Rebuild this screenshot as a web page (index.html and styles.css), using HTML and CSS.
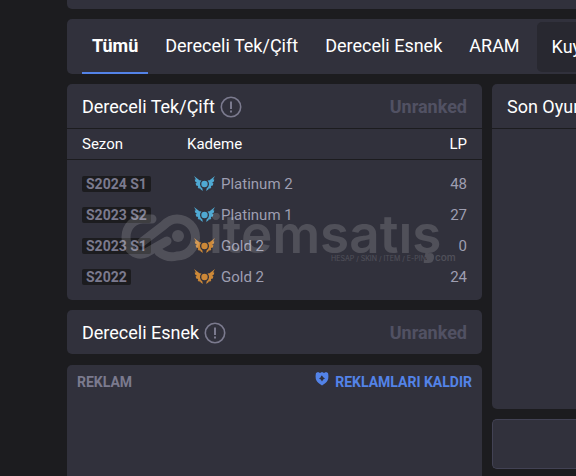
FILE: index.html
```html
<!DOCTYPE html>
<html lang="tr">
<head>
<meta charset="utf-8">
<meta name="viewport" content="width=device-width, initial-scale=1">
<title>Dereceli</title>
<link rel="stylesheet" href="styles.css">
</head>
<body>
<svg class="defs" aria-hidden="true">
  <symbol id="wings" viewBox="0 0 21 15">
    <circle cx="10.500" cy="8" r="3.200"/>
    <path d="M0 0 5.500 4.200 7.500 4.600Q5.800 6.300 6 8.500 6.300 11 8.300 12.200L8.800 15 6.500 13.200 5.900 11.800 5.200 12.900 3.700 11.300 4.200 10 2.200 9.500 1.600 7.300 3 7 1 5.300 0.800 3.300 2 3.500Z"/>
    <path d="M21 0 15.500 4.200 13.500 4.600Q15.200 6.300 15 8.500 14.700 11 12.700 12.200L12.200 15 14.500 13.200 15.100 11.800 15.800 12.900 17.300 11.300 16.800 10 18.800 9.500 19.400 7.300 18 7 20 5.300 20.200 3.300 19 3.500Z"/>
  </symbol>
  <symbol id="info" viewBox="0 0 22 22">
    <circle cx="11" cy="11" r="9.700" fill="none" stroke="currentColor" stroke-width="1.600"/>
    <path d="M10 5.500h2v7.500h-2zM10 14.500h2v2h-2z" fill="currentColor"/>
  </symbol>
</svg>
<div class="page">
  <div class="panel strip"></div>
  <nav class="panel tabs">
    <a class="tab active" href="#all">Tümü</a>
    <a class="tab" href="#solo">Dereceli Tek/Çift</a>
    <a class="tab" href="#flex">Dereceli Esnek</a>
    <a class="tab" href="#aram">ARAM</a>
    <select class="queue" aria-label="Kuy"><option>Kuy</option></select>
  </nav>
  <div class="columns">
    <main class="column">
      <section class="panel ranked">
        <header class="head ruled">
          <h2>Dereceli Tek/Çift</h2>
          <svg class="info"><use href="#info"/></svg>
          <span class="rank">Unranked</span>
        </header>
        <table>
          <thead><tr><th class="season">Sezon</th><th>Kademe</th><th class="lp">LP</th></tr></thead>
          <tbody>
            <tr><td><span class="badge">S2024 S1</span></td><td><span class="tier"><svg class="wings platinum"><use href="#wings"/></svg>Platinum 2</span></td><td class="lp">48</td></tr>
            <tr><td><span class="badge">S2023 S2</span></td><td><span class="tier"><svg class="wings platinum"><use href="#wings"/></svg>Platinum 1</span></td><td class="lp">27</td></tr>
            <tr><td><span class="badge">S2023 S1</span></td><td><span class="tier"><svg class="wings gold"><use href="#wings"/></svg>Gold 2</span></td><td class="lp">0</td></tr>
            <tr><td><span class="badge">S2022</span></td><td><span class="tier"><svg class="wings gold"><use href="#wings"/></svg>Gold 2</span></td><td class="lp">24</td></tr>
          </tbody>
        </table>
        <svg class="watermark" viewBox="0 0 340 60">
          <g fill="none" stroke="#fff" stroke-width="9" stroke-linecap="round">
            <path d="M32 6H24A17 18 0 0 0 6 24C6 37 17 44 26 40L47 28"/>
            <path d="M22 29 44 12C48 8 52 6 57 6A18 18 0 0 1 57 43C50 45 44 43 39 39"/>
          </g>
          <circle cx="58" cy="23" r="6" fill="#fff"/>
          <text class="wordmark" x="89" y="40">itemsatış</text>
          <text class="tagline" x="211" y="48">HESAP / SKIN / ITEM / E-PIN</text>
          <circle cx="310" cy="44" r="4" fill="#fff"/>
          <text class="domain" x="315" y="48">com</text>
        </svg>
      </section>
      <section class="panel">
        <header class="head">
          <h2>Dereceli Esnek</h2>
          <svg class="info"><use href="#info"/></svg>
          <span class="rank">Unranked</span>
        </header>
      </section>
      <section class="panel advert">
        <span>REKLAM</span>
        <a class="remove" href="#remove">
          <svg class="shield" viewBox="0 0 14 14"><path fill="currentColor" fill-rule="evenodd" d="M1 1 3 0 5 1 7 0 9 1 11 0 13 1Q14.500 8 10.500 11L7 13.500 3.500 11Q-.5 8 1 1ZM6 4 5.800 5.300 4 6.500 5.800 7.500 7 9.500 8.200 7.500 10 6.500 8.200 5.300 7 3.500Z"/></svg>
          REKLAMLARI KALDIR
        </a>
      </section>
    </main>
    <aside class="column side">
      <section class="panel recent"><header class="head ruled"><h2>Son Oyun</h2></header></section>
      <section class="panel outlined"></section>
    </aside>
  </div>
</div>
</body>
</html>
```

FILE: styles.css
```css
* { box-sizing: border-box; }
body {
  margin: 0;
  background: #1c1c1f;
  color: #fff;
  font: 15px/20px Roboto, sans-serif;
  overflow: hidden;
}
.defs { position: absolute; width: 0; height: 0; }
.page {
  display: flex;
  flex-direction: column;
  gap: 10px;
  min-height: 100vh;
  padding-left: 67px;
}
.panel { background: #31313c; border-radius: 5px; }
.strip { height: 9px; border-radius: 0 0 0 5px; }
.tabs {
  display: flex;
  gap: 7px;
  height: 55px;
  padding-left: 15px;
  border-radius: 5px 0 0 5px;
  white-space: nowrap;
}
.tab {
  padding: 17px 10px 16px;
  color: #fff;
  font-size: 18px;
  text-decoration: none;
}
.active { border-bottom: 2px solid #5383e8; font-weight: 700; }
.queue {
  flex: 1;
  align-self: center;
  min-width: 0;
  height: 50px;
  padding: 0 0 0 15px;
  border: 0;
  border-radius: 5px 0 0 5px;
  appearance: none;
  background: #282830;
  color: #fff;
  font: 18px/20px Roboto, sans-serif;
}
.columns { display: flex; flex: 1; gap: 10px; }
.column { display: flex; flex-direction: column; gap: 10px; flex: 0 0 415px; }
.side { flex: 1; min-width: 0; }
.side .panel { border-radius: 5px 0 0 5px; }
.ranked { position: relative; }
.head {
  display: flex;
  align-items: center;
  gap: 5px;
  height: 44px;
  padding: 2px 15px 0;
  white-space: nowrap;
}
.ruled { height: 45px; border-bottom: 1px solid #1c1c1f; }
h2 { margin: 0; font-size: 18px; font-weight: 400; }
.info { width: 22px; height: 22px; color: #7b7a8e; }
.rank { margin-left: auto; color: #515163; font-size: 18px; font-weight: 700; }
table { width: 100%; border-collapse: separate; border-spacing: 0; }
th {
  height: 31px;
  padding: 0;
  border-bottom: 1px solid #1c1c1f;
  font-weight: 400;
  text-align: left;
}
th:first-child, td:first-child { padding-left: 15px; }
.season { width: 120px; }
th.lp, td.lp { padding-right: 15px; text-align: right; }
td { height: 31px; padding: 0; color: #9e9eb1; }
tbody::before, tbody::after { content: ""; display: table-row; height: 8px; }
.badge {
  display: inline-block;
  padding: 0 4px;
  border-radius: 2px;
  background: #1c1c1f;
  color: #7b7a8e;
  font-size: 14px;
  font-weight: 700;
  line-height: 16px;
}
.tier { display: flex; align-items: center; gap: 6px; padding-left: 7px; }
.wings { width: 21px; height: 15px; }
.platinum { fill: #4fa9d3; }
.gold { fill: #cd8837; }
.watermark {
  position: absolute;
  top: 129px;
  left: 53px;
  width: 340px;
  height: 60px;
  opacity: .15;
  pointer-events: none;
}
.watermark text { fill: #fff; }
.wordmark { font: 600 53px Inter, sans-serif; }
.tagline { font: 7px Inter, sans-serif; }
.domain { font: 500 10px Inter, sans-serif; }
.advert {
  display: flex;
  flex: 1;
  align-items: flex-start;
  justify-content: space-between;
  margin-top: 1px;
  padding: 7px 10px;
  border-radius: 5px 5px 0 0;
  color: #7b7a8e;
  font-size: 14px;
  font-weight: 700;
}
.remove { display: flex; gap: 6px; color: #5383e8; text-decoration: none; }
.shield { width: 14px; height: 14px; }
.recent { height: 325px; }
.outlined { height: 50px; border: 1px solid #424254; border-right: 0; }
```
